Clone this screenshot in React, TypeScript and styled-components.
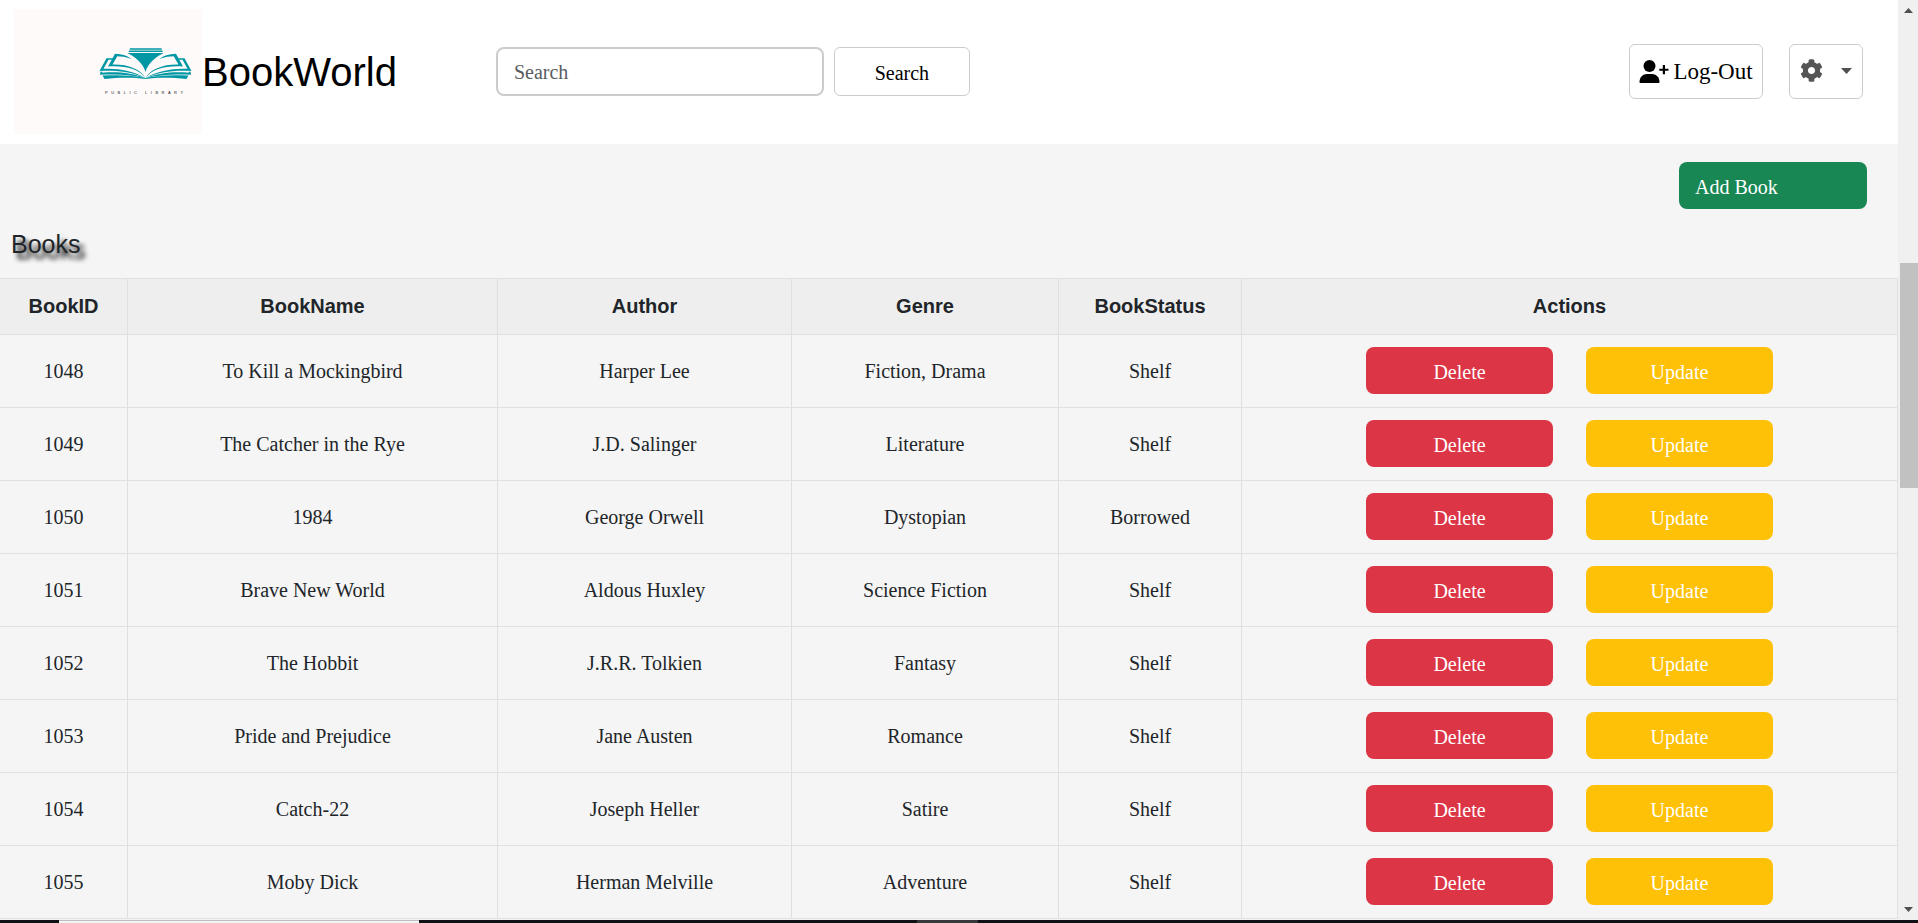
import React from 'react';
import styled, { createGlobalStyle } from 'styled-components';
import { FaCog } from 'react-icons/fa';

const serif = '"Liberation Serif", "Times New Roman", serif';
const sans = '"Liberation Sans", Arial, sans-serif';

const GlobalStyle = createGlobalStyle`
  *, *::before, *::after { box-sizing: border-box; }
  body {
    margin: 0;
    background: #f5f5f5;
    color: #212529;
    font: 20px/30px ${serif};
  }
  button, input { font: inherit; }
`;

const Screen = styled.div`
  display: flex;
  flex-direction: column;
  height: 100vh;
  overflow: hidden;
`;

const Viewport = styled.div`
  flex: 1;
  min-height: 0;
  display: flex;
`;

const Page = styled.div`
  flex: 1;
  min-width: 0;
  overflow: hidden;
`;

const Header = styled.header`
  display: flex;
  align-items: center;
  height: 144px;
  padding: 0 35px 1px 14px;
  background: #fff;
`;

const LogoBox = styled.div`
  width: 188px;
  height: 125px;
  background: #fffafa;
  svg { display: block; }
`;

const Brand = styled.a`
  display: flex;
  align-items: center;
  color: #000;
  font: 40px/60px ${sans};
  text-decoration: none;
`;

const SearchForm = styled.form`
  display: flex;
  gap: 10px;
  margin-left: 99px;
`;

const SearchInput = styled.input`
  width: 328px;
  height: 49px;
  padding: 2px 16px 0;
  border: 2px solid #ccc;
  border-radius: 8px;
  background: #fff;
  color: #212529;
  &::placeholder { color: #595c5f; opacity: 1; }
`;

const OutlineButton = styled.button`
  display: flex;
  align-items: center;
  justify-content: center;
  border: 1px solid #ccc;
  border-radius: 6px;
  background: #fff;
  color: #000;
  padding: 0;
`;

const SearchButton = styled(OutlineButton)`
  width: 136px;
  height: 49px;
  padding-top: 2px;
`;

const HeaderActions = styled.div`
  display: flex;
  gap: 26px;
  margin-left: auto;
`;

const LogOutButton = styled(OutlineButton)`
  width: 134px;
  height: 55px;
  gap: 4px;
  font-size: 23px;
`;

const SettingsButton = styled(OutlineButton)`
  width: 74px;
  height: 55px;
  padding-bottom: 2px;
  gap: 18px;
  color: #555;
`;

const ActionButton = styled.button<{ $tone: string }>`
  width: 187px;
  height: 47px;
  padding: 2px 16px 0;
  border: 0;
  border-radius: 8px;
  background: ${(p) => p.$tone};
  color: #fff;
`;

const AddButton = styled(ActionButton)`
  width: 188px;
  text-align: left;
`;

const Toolbar = styled.div`
  display: flex;
  justify-content: flex-end;
  padding: 18px 31px 0 0;
`;

const Title = styled.h1`
  margin: 20px 0 19px 11px;
  font: 25px/30px ${sans};
  text-shadow: 5px 6px 5px #000;
`;

const Table = styled.table`
  width: 100%;
  table-layout: fixed;
  border-collapse: separate;
  border-spacing: 0;
  border-top: 1px solid #dee0e1;
  text-align: center;
`;

const Col = styled.col<{ $w?: string }>`
  width: ${(p) => p.$w ?? 'auto'};
`;

const cell = `
  padding: 0;
  border-right: 1px solid #dee0e1;
  border-bottom: 1px solid #dee0e1;
`;

const HeadCell = styled.th`
  ${cell}
  height: 56px;
  padding-bottom: 2px;
  background: #eee;
  font-family: ${sans};
  font-weight: 700;
`;

const Cell = styled.td`
  ${cell}
  height: 73px;
`;

const ActionsCell = styled(Cell)`
  padding-bottom: 1px;
`;

const RowActions = styled.div`
  display: flex;
  justify-content: center;
  gap: 33px;
`;

const ScrollTrack = styled.div`
  flex: none;
  width: 20px;
  display: flex;
  flex-direction: column;
  align-items: center;
  justify-content: space-between;
  padding: 8px 0;
  background: #f0f0f0;
  position: relative;
`;

const ScrollThumb = styled.div`
  position: absolute;
  top: 263px;
  right: 0;
  width: 18px;
  height: 225px;
  background: #c1c1c1;
`;

const Taskbar = styled.div`
  flex: none;
  display: flex;
  height: 3px;
  background: #101014;
`;

const TaskItem = styled.div<{ $start: string; $width: string; $tone: string }>`
  margin-left: ${(p) => p.$start};
  width: ${(p) => p.$width};
  background: ${(p) => p.$tone};
`;

const ActiveTask = styled(TaskItem)`
  border-top: 1px solid #bdbdbd;
`;

const books = [
  ['1048', 'To Kill a Mockingbird', 'Harper Lee', 'Fiction, Drama', 'Shelf'],
  ['1049', 'The Catcher in the Rye', 'J.D. Salinger', 'Literature', 'Shelf'],
  ['1050', '1984', 'George Orwell', 'Dystopian', 'Borrowed'],
  ['1051', 'Brave New World', 'Aldous Huxley', 'Science Fiction', 'Shelf'],
  ['1052', 'The Hobbit', 'J.R.R. Tolkien', 'Fantasy', 'Shelf'],
  ['1053', 'Pride and Prejudice', 'Jane Austen', 'Romance', 'Shelf'],
  ['1054', 'Catch-22', 'Joseph Heller', 'Satire', 'Shelf'],
  ['1055', 'Moby Dick', 'Herman Melville', 'Adventure', 'Shelf'],
];

const headings = ['BookID', 'BookName', 'Author', 'Genre', 'BookStatus', 'Actions'];

const BookHalf = () => (
  <g fill="#0097a4">
    <path d="M145.500 78C138 68.500 125 65.500 108 66.500L115 53.800C122 54 128 56 131.500 59C126 57 121 56.300 117.300 56.300L112.500 64.500C127 64 140 68.500 145.500 78Z" />
    <path d="M113.500 58.200H106.500L99.500 71C116 70 132 71.500 145.500 78C133 70.500 117 68 103.500 68.800L108.500 59.800H112.500Z" />
    <path d="M100.500 71.800L100 74.800C116 73.800 132 74.500 145.500 78.300C133 72.800 117 71.500 102.300 72.700L102.500 71.700Z" />
    <path d="M102.500 75.600L104.500 79C119 77.300 134 77.300 145.500 79V78C132 75 117 74.800 102.500 75.600Z" />
  </g>
);

const Logo = () => (
  <svg width="188" height="125" viewBox="14 9 188 125" role="img" aria-label="Public Library">
    <BookHalf />
    <g transform="translate(291 0) scale(-1 1)"><BookHalf /></g>
    <path
      d="M130 48.300H161.500L162 49.700H129.500ZM129.300 50.600H162.200L163 52H128.500ZM127.500 53H163.500C157 56.500 148 62.500 145.500 72C143 62.500 134 56.500 127.500 53Z"
      fill="#0097a4"
    />
    <text x="105" y="94" fontFamily="Liberation Sans, Arial, sans-serif" fontSize="4" letterSpacing="3.500" fill="#222">
      PUBLIC LIBRARY
    </text>
  </svg>
);

const UserPlusIcon = () => (
  <svg width="30" height="24" viewBox="0 0 30 24" aria-hidden="true">
    <circle cx="10.500" cy="6" r="6" />
    <path d="M1.500 23C.8 23 .5 22.500.5 22C.5 17 4 14 8 14H13C17 14 20.500 17 20.500 22C20.500 22.500 20.200 23 19.500 23Z" />
    <path d="M23.800 5H26V8.700H29.500V10.700H26V14.300H23.800V10.700H20.300V8.700H23.800Z" />
  </svg>
);

const Arrow = ({ up, width = 9, height = 5 }: { up?: boolean; width?: number; height?: number }) => (
  <svg width={width} height={height} viewBox="0 0 10 5" preserveAspectRatio="none" fill="#505050" aria-hidden="true">
    <path d={up ? 'M0 5L5 0L10 5Z' : 'M0 0H10L5 5Z'} />
  </svg>
);

export default function App() {
  return (
    <Screen>
      <GlobalStyle />
      <Viewport>
        <Page>
          <Header>
            <Brand href="#">
              <LogoBox><Logo /></LogoBox>
              BookWorld
            </Brand>
            <SearchForm role="search">
              <SearchInput type="text" placeholder="Search" aria-label="Search" />
              <SearchButton type="button">Search</SearchButton>
            </SearchForm>
            <HeaderActions>
              <LogOutButton type="button"><UserPlusIcon />Log-Out</LogOutButton>
              <SettingsButton type="button" aria-label="Settings">
                <FaCog size={23} />
                <Arrow width={11} height={6} />
              </SettingsButton>
            </HeaderActions>
          </Header>
          <main>
            <Toolbar>
              <AddButton type="button" $tone="#198754">Add Book</AddButton>
            </Toolbar>
            <Title>Books</Title>
            <Table>
              <colgroup>
                <Col $w="128px" />
                <Col $w="370px" />
                <Col $w="294px" />
                <Col $w="267px" />
                <Col $w="183px" />
                <Col />
              </colgroup>
              <thead>
                <tr>{headings.map((h) => <HeadCell key={h} scope="col">{h}</HeadCell>)}</tr>
              </thead>
              <tbody>
                {books.map((book) => (
                  <tr key={book[0]}>
                    {book.map((value, i) => <Cell key={i}>{value}</Cell>)}
                    <ActionsCell>
                      <RowActions>
                        <ActionButton type="button" $tone="#dc3545">Delete</ActionButton>
                        <ActionButton type="button" $tone="#ffc107">Update</ActionButton>
                      </RowActions>
                    </ActionsCell>
                  </tr>
                ))}
              </tbody>
            </Table>
          </main>
        </Page>
        <ScrollTrack>
          <Arrow up />
          <ScrollThumb />
          <Arrow />
        </ScrollTrack>
      </Viewport>
      <Taskbar>
        <ActiveTask $start="59px" $width="360px" $tone="#f4f4f4" />
        <TaskItem $start="498px" $width="61px" $tone="#38383a" />
      </Taskbar>
    </Screen>
  );
}
